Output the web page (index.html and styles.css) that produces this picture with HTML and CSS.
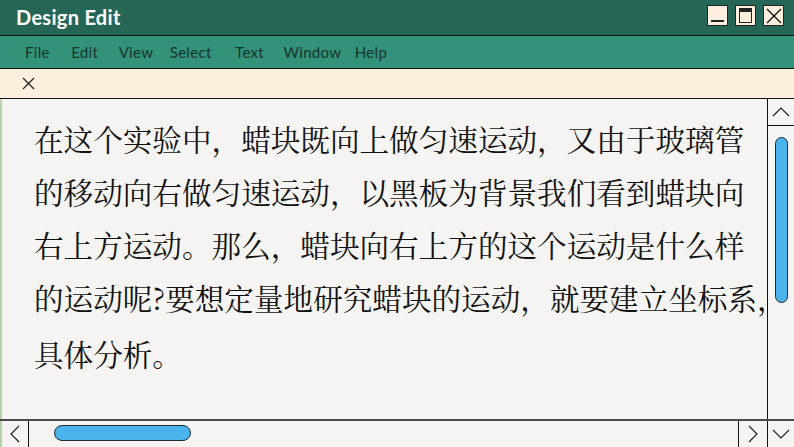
FILE: index.html
```html
<!DOCTYPE html>
<html lang="zh">
<head>
    <meta charset="UTF-8">
    <title>Design Edit</title>
    <link rel="stylesheet" href="styles.css">
</head>
<body>
    <div class="window">
        <div class="titlebar">
            <span class="title">Design Edit</span>
            <div class="controls">
                <span class="ctl ctl-min"></span>
                <span class="ctl ctl-max"></span>
                <span class="ctl ctl-close">
                    <svg width="16" height="16" viewBox="0 0 16 16"><path d="M1 1 L15 15 M15 1 L1 15" stroke="#111" stroke-width="1.4"/></svg>
                </span>
            </div>
        </div>

        <div class="menubar">
            <span>File</span>
            <span>Edit</span>
            <span>View</span>
            <span>Select</span>
            <span>Text</span>
            <span>Window</span>
            <span>Help</span>
        </div>

        <div class="tabs">
            <svg class="tab-close" width="13" height="13" viewBox="0 0 13 13"><path d="M1 1 L12 12 M12 1 L1 12" stroke="#222" stroke-width="1.3"/></svg>
        </div>

        <div class="main">
            <div class="content">
                <div class="line">在这个实验中，蜡块既向上做匀速运动，又由于玻璃管</div>
                <div class="line">的移动向右做匀速运动，以黑板为背景我们看到蜡块向</div>
                <div class="line">右上方运动。那么，蜡块向右上方的这个运动是什么样</div>
                <div class="line">的运动呢?要想定量地研究蜡块的运动，就要建立坐标系，</div>
                <div class="line">具体分析。</div>
            </div>
            <div class="vscroll">
                <div class="arrow-btn up">
                    <svg width="18" height="10" viewBox="0 0 18 10"><path d="M1 9 L9 1 L17 9" fill="none" stroke="#222" stroke-width="1.2"/></svg>
                </div>
                <div class="vtrack">
                    <div class="vthumb"></div>
                </div>
            </div>
        </div>

        <div class="hscroll">
            <div class="arrow-btn left">
                <svg width="10" height="18" viewBox="0 0 10 18"><path d="M9 1 L1 9 L9 17" fill="none" stroke="#222" stroke-width="1.2"/></svg>
            </div>
            <div class="htrack">
                <div class="hthumb"></div>
            </div>
            <div class="arrow-btn right">
                <svg width="10" height="18" viewBox="0 0 10 18"><path d="M1 1 L9 9 L1 17" fill="none" stroke="#222" stroke-width="1.2"/></svg>
            </div>
            <div class="arrow-btn down">
                <svg width="18" height="10" viewBox="0 0 18 10"><path d="M1 1 L9 9 L17 1" fill="none" stroke="#222" stroke-width="1.2"/></svg>
            </div>
        </div>
    </div>
</body>
</html>
```

FILE: styles.css
```css
body {
    margin: 0;
    padding: 0;
    font-family: Lato, "Open Sans", sans-serif;
    background-color: #f5f4f2;
}

.window {
    width: 794px;
    height: 447px;
    display: flex;
    flex-direction: column;
    overflow: hidden;
}

.titlebar {
    height: 35px;
    background-color: #256656;
    border-bottom: 1px solid #111;
    display: flex;
    align-items: center;
    justify-content: space-between;
    padding: 0 10px 0 16px;
    flex-shrink: 0;
}

.title {
    color: #fff;
    font-size: 20px;
    font-weight: bold;
    letter-spacing: 0.3px;
    margin-top: -2px;
}

.controls {
    display: flex;
    gap: 7px;
    margin-top: -4px;
}

.ctl {
    width: 19px;
    height: 19px;
    background-color: #fdefde;
    border: 1px solid #222;
    display: flex;
    align-items: center;
    justify-content: center;
    box-sizing: content-box;
}

.ctl-min {
    position: relative;
}

.ctl-min::after {
    content: "";
    position: absolute;
    left: 3px;
    right: 3px;
    bottom: 3px;
    height: 2px;
    background-color: #222;
}

.ctl-max::after {
    content: "";
    width: 11px;
    height: 10px;
    border: 1.5px solid #222;
    border-top-width: 4px;
}

.menubar {
    height: 32px;
    background-color: #33927a;
    border-bottom: 1px solid #111;
    display: flex;
    align-items: center;
    padding-left: 25px;
    font-size: 15px;
    color: #17352d;
    letter-spacing: 0.3px;
    flex-shrink: 0;
}

.menubar span:nth-child(2) { margin-left: 21.5px; }
.menubar span:nth-child(3) { margin-left: 20.5px; }
.menubar span:nth-child(4) { margin-left: 16.5px; }
.menubar span:nth-child(5) { margin-left: 23.5px; }
.menubar span:nth-child(6) { margin-left: 19.5px; }
.menubar span:nth-child(7) { margin-left: 13.5px; }

.tabs {
    height: 29px;
    background-color: #fdefde;
    border-bottom: 1px solid #111;
    display: flex;
    align-items: center;
    padding-left: 22px;
    flex-shrink: 0;
}

.main {
    flex: 1;
    display: flex;
    min-height: 0;
}

.content {
    flex: 1;
    min-width: 0;
    border-left: 2px solid #b8d3a7;
    padding: 13px 0 0 32px;
    font-family: "Noto Serif CJK SC", "Noto Sans CJK SC", serif;
    font-size: 29.6px;
    color: #111;
    white-space: nowrap;
}

.line {
    height: 53px;
    line-height: 53px;
}

.line:nth-child(5) {
    margin-top: 3px;
}

.vscroll {
    width: 26px;
    flex-shrink: 0;
    border-left: 1px solid #111;
    display: flex;
    flex-direction: column;
    background-color: #f5f4f2;
    position: relative;
    z-index: 1;
}

.arrow-btn {
    display: flex;
    align-items: center;
    justify-content: center;
    flex-shrink: 0;
}

.arrow-btn.up {
    height: 26px;
    border-bottom: 1px solid #111;
}

.vtrack {
    flex: 1;
    padding: 11px 0 0 7px;
}

.vthumb {
    width: 11px;
    height: 164px;
    background-color: #4ab3ec;
    border: 1px solid #1d2b33;
    border-radius: 7px;
}

.hscroll {
    height: 26px;
    border-top: 2px solid #4a4a4a;
    display: flex;
    flex-shrink: 0;
}

.arrow-btn.left {
    width: 26px;
    border-right: 1px solid #111;
    border-left: 2px solid #b8d3a7;
}

.htrack {
    flex: 1;
    padding: 4px 0 0 25px;
}

.hthumb {
    width: 135px;
    height: 14px;
    background-color: #4ab3ec;
    border: 1px solid #1d2b33;
    border-radius: 8px;
}

.arrow-btn.right {
    width: 28px;
    border-left: 1px solid #111;
}

.arrow-btn.down {
    width: 26px;
    border-left: 1px solid #111;
}
```
